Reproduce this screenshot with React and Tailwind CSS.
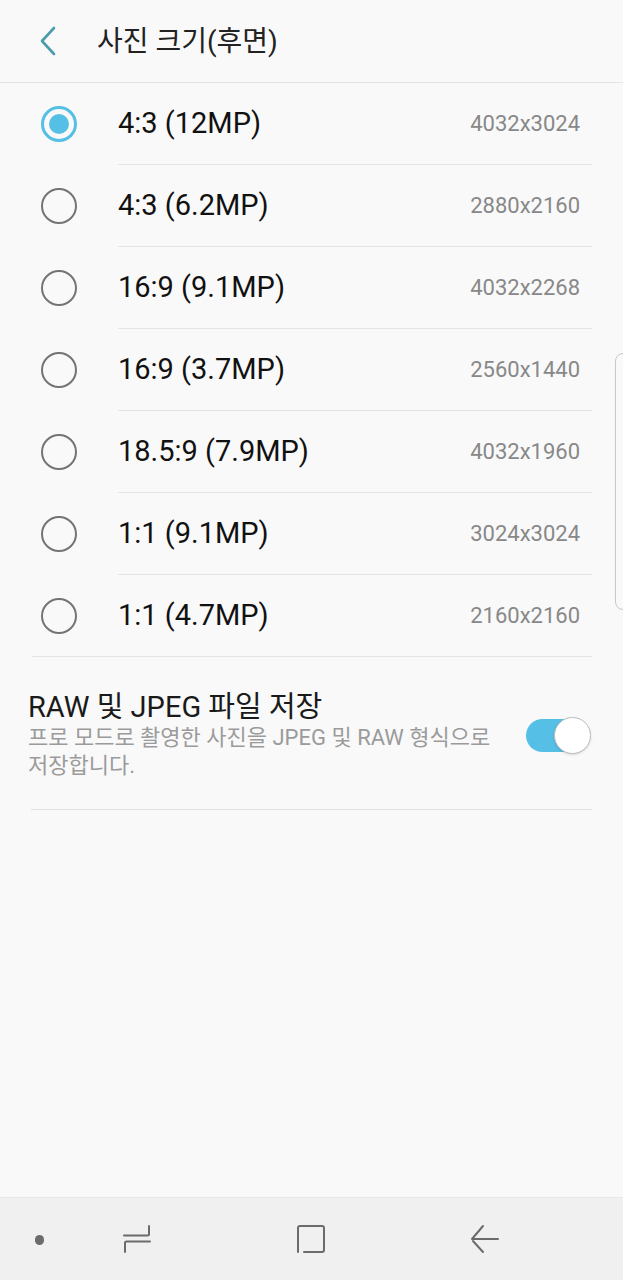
const options = [
  { label: '4:3 (12MP)', res: '4032x3024', selected: true },
  { label: '4:3 (6.2MP)', res: '2880x2160' },
  { label: '16:9 (9.1MP)', res: '4032x2268' },
  { label: '16:9 (3.7MP)', res: '2560x1440' },
  { label: '18.5:9 (7.9MP)', res: '4032x1960' },
  { label: '1:1 (9.1MP)', res: '3024x3024' },
  { label: '1:1 (4.7MP)', res: '2160x2160' },
];

function Radio({ checked }) {
  if (checked) {
    return (
      <div className="w-[36px] h-[36px] rounded-full border-[3px] border-[#56bfe6] flex items-center justify-center">
        <div className="w-[20px] h-[20px] rounded-full bg-[#56bfe6]" />
      </div>
    );
  }
  return <div className="w-[36px] h-[36px] rounded-full border-2 border-[#747474]" />;
}

function NavBar() {
  return (
    <div className="h-[83px] bg-[#f0f0f0] border-t border-[#e8e8e8] flex items-center relative pl-[122px] gap-[144px]">
      <div className="absolute left-[35px] top-[37px] w-[9px] h-[10px] rounded-full bg-[#6b6b6b]" />
      <svg width="30" height="30" viewBox="0 0 30 30" fill="none" stroke="#6b6b6b" strokeWidth="2" strokeLinecap="round">
        <path d="M27 2 V10 a1.5 1.5 0 0 1 -1.5 1.5 H2" />
        <path d="M28 17.5 H4.5 a1.5 1.5 0 0 0 -1.5 1.5 V28" />
      </svg>
      <svg width="30" height="30" viewBox="0 0 30 30" fill="none" stroke="#6b6b6b" strokeWidth="2" strokeLinecap="round">
        <path d="M2 28 V4 a2 2 0 0 1 2 -2 H26 a2 2 0 0 1 2 2 V26 a2 2 0 0 1 -2 2 H8" />
      </svg>
      <svg width="30" height="30" viewBox="0 0 30 30" fill="none" stroke="#6b6b6b" strokeWidth="2" strokeLinecap="round">
        <path d="M13 2 L2 15 M2.5 15 H28 M3 17 L13 28" />
      </svg>
    </div>
  );
}

export default function App() {
  return (
    <div
      className="w-[623px] h-[1280px] bg-[#f9f9f9] flex flex-col relative overflow-hidden"
      style={{ fontFamily: 'Roboto, "Noto Sans CJK KR", sans-serif' }}
    >
      <div className="h-[83px] border-b border-[#e4e4e4] flex items-center shrink-0">
        <div className="w-[97px] flex items-center pl-[38px]">
          <svg width="20" height="30" viewBox="0 0 20 30" fill="none" stroke="#4b9cab" strokeWidth="2.6" strokeLinecap="round" strokeLinejoin="round">
            <path d="M16 2 L4 15 L16 28" />
          </svg>
        </div>
        <div className="text-[28px] text-[#222] leading-none pt-[2px]">사진 크기(후면)</div>
      </div>

      <div>
        {options.map((o, i) => (
          <div key={o.label} className="h-[82px] flex items-stretch">
            <div className="w-[118px] flex items-center pl-[41px] shrink-0">
              <Radio checked={o.selected} />
            </div>
            <div
              className={
                'flex-1 flex items-center pr-[12px] mr-[31px] border-b border-[#e5e5e5] ' +
                (i === options.length - 1 ? '-ml-[86px] pl-[86px]' : '')
              }
            >
              <span className="flex-1 text-[29px] text-[#111] leading-none">{o.label}</span>
              <span className="text-[22px] text-[#888] leading-none">{o.res}</span>
            </div>
          </div>
        ))}
      </div>

      <div className="mx-[31px] border-b border-[#e0e0e0] pt-[33px] pb-[29px] flex items-center">
        <div className="flex-1 -ml-[3px]">
          <div className="text-[29px] leading-[34px] text-[#1a1a1a]">RAW 및 JPEG 파일 저장</div>
          <div className="text-[22px] leading-[28px] text-[#9b9b9b] pr-[20px] break-keep">
            프로 모드로 촬영한 사진을 JPEG 및 RAW 형식으로 저장합니다.
          </div>
        </div>
        <div className="relative w-[65px] h-[38px] flex items-center shrink-0 mr-[1px]">
          <div className="absolute left-[0px] right-[10px] h-[33px] rounded-full bg-[#56bfe6]" />
          <div className="absolute right-0 w-[37px] h-[37px] rounded-full bg-white border border-[#bdbdbd] shadow-sm" />
        </div>
      </div>

      <div className="flex-1" />
      <NavBar />

      <div className="absolute right-[-8px] top-[353px] w-[16px] h-[257px] rounded-[8px] border border-[#c8c8c8]" />
    </div>
  );
}
